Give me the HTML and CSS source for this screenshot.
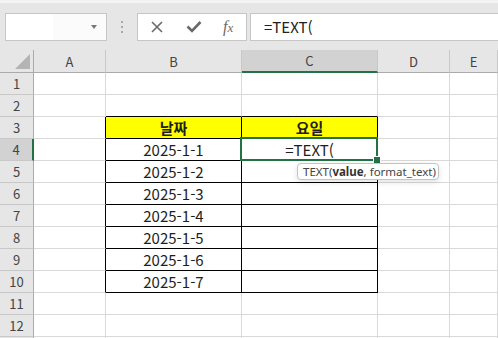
FILE: index.html
```html
<!DOCTYPE html>
<html lang="ko">
<head>
    <meta charset="UTF-8">
    <meta name="viewport" content="width=device-width, initial-scale=1.0">
    <title>TEXT 함수</title>
    <link rel="stylesheet" href="styles.css">
</head>
<body>
    <div class="ribbon-edge"></div>
    <div class="toolbar">
        <div class="name-box">
            <span class="name-arrow"></span>
        </div>
        <div class="grip"><i></i><i></i><i></i></div>
        <div class="fx-buttons">
            <svg class="ico" width="14" height="14" viewBox="0 0 14 14">
                <path d="M2 2 L12 12 M12 2 L2 12" stroke="#6a6a6a" stroke-width="1.6" fill="none"/>
            </svg>
            <svg class="ico" width="16" height="14" viewBox="0 0 16 14">
                <path d="M1.5 6.5 L6 11 L14.5 2" stroke="#6a6a6a" stroke-width="2.6" fill="none"/>
            </svg>
            <span class="fx">f<small>x</small></span>
        </div>
        <div class="formula">=TEXT(</div>
    </div>

    <div class="sheet">
        <div class="row head">
            <div class="corner">
                <svg width="15" height="15" viewBox="0 0 15 15"><polygon points="15,0 15,15 0,15" fill="#b4b4b4"/></svg>
            </div>
            <div class="ch">A</div>
            <div class="ch">B</div>
            <div class="ch on">C</div>
            <div class="ch">D</div>
            <div class="ch">E</div>
        </div>
        <div class="row">
            <div class="rh">1</div><div class="c"></div><div class="c"></div><div class="c"></div><div class="c"></div><div class="c"></div>
        </div>
        <div class="row">
            <div class="rh">2</div><div class="c"></div><div class="c tt"></div><div class="c tt"></div><div class="c"></div><div class="c"></div>
        </div>
        <div class="row">
            <div class="rh">3</div><div class="c tl"></div><div class="c t hd">날짜</div><div class="c t hd">요일</div><div class="c"></div><div class="c"></div>
        </div>
        <div class="row">
            <div class="rh on">4</div><div class="c tl"></div><div class="c t">2025-1-1</div>
            <div class="c t sel">=TEXT(
                <div class="tip">TEXT(<b>value</b>, format_text)</div>
            </div>
            <div class="c"></div><div class="c"></div>
        </div>
        <div class="row">
            <div class="rh">5</div><div class="c tl"></div><div class="c t">2025-1-2</div><div class="c t"></div><div class="c"></div><div class="c"></div>
        </div>
        <div class="row">
            <div class="rh">6</div><div class="c tl"></div><div class="c t">2025-1-3</div><div class="c t"></div><div class="c"></div><div class="c"></div>
        </div>
        <div class="row">
            <div class="rh">7</div><div class="c tl"></div><div class="c t">2025-1-4</div><div class="c t"></div><div class="c"></div><div class="c"></div>
        </div>
        <div class="row">
            <div class="rh">8</div><div class="c tl"></div><div class="c t">2025-1-5</div><div class="c t"></div><div class="c"></div><div class="c"></div>
        </div>
        <div class="row">
            <div class="rh">9</div><div class="c tl"></div><div class="c t">2025-1-6</div><div class="c t"></div><div class="c"></div><div class="c"></div>
        </div>
        <div class="row">
            <div class="rh">10</div><div class="c tl"></div><div class="c t">2025-1-7</div><div class="c t"></div><div class="c"></div><div class="c"></div>
        </div>
        <div class="row">
            <div class="rh">11</div><div class="c"></div><div class="c"></div><div class="c"></div><div class="c"></div><div class="c"></div>
        </div>
        <div class="row">
            <div class="rh">12</div><div class="c"></div><div class="c"></div><div class="c"></div><div class="c"></div><div class="c"></div>
        </div>
        <div class="row">
            <div class="rh"></div><div class="c"></div><div class="c"></div><div class="c"></div><div class="c"></div><div class="c"></div>
        </div>
    </div>
</body>
</html>
```

FILE: styles.css
```css
* {
    box-sizing: border-box;
}
body {
    margin: 0;
    width: 498px;
    height: 338px;
    overflow: hidden;
    background: #ffffff;
    font-family: "Noto Sans CJK KR", "Noto Sans", sans-serif;
    color: #222;
}
.ribbon-edge {
    height: 3px;
    background: #f3f3f3;
}
.toolbar {
    display: flex;
    height: 47px;
    padding: 10px 0 9px 5px;
    background: #e6e6e6;
}
.name-box {
    position: relative;
    width: 102px;
    background: linear-gradient(to right, #fff 0, #fff 47px, #fbfbfb 47px);
    border: 1px solid #c6c6c6;
}
.name-arrow {
    position: absolute;
    right: 9px;
    top: 11px;
    border-left: 3px solid transparent;
    border-right: 3px solid transparent;
    border-top: 4px solid #777;
}
.grip {
    width: 30px;
    display: flex;
    flex-direction: column;
    align-items: center;
    justify-content: center;
    gap: 3px;
}
.grip i {
    display: block;
    width: 2px;
    height: 2px;
    background: #a8a8a8;
}
.fx-buttons {
    width: 110px;
    margin-right: 3px;
    display: flex;
    align-items: center;
    padding-left: 12px;
    gap: 22px;
    background: #fff;
    border: 1px solid #c6c6c6;
}
.fx {
    font-family: "Liberation Serif", serif;
    font-style: italic;
    font-size: 16px;
    color: #6a6a6a;
    line-height: 1;
    margin-left: -1px;
}
.fx small {
    font-size: 13px;
}
.formula {
    flex: 1;
    background: #fff;
    border: 1px solid #c6c6c6;
    border-right: none;
    padding-left: 13px;
    font-size: 15px;
    line-height: 25px;
    color: #222;
}
.row {
    display: grid;
    grid-template-columns: 34px 72px 136px 136px 72px 1fr;
    height: 22px;
}
.row.head {
    height: 23px;
}
.row > div {
    display: flex;
    align-items: center;
    justify-content: center;
    border-right: 1px solid #d9d9d9;
    border-bottom: 1px solid #d9d9d9;
}
.corner {
    background: #e6e6e6;
    border-right: 1px solid #ababab !important;
    border-bottom: 1px solid #ababab !important;
    justify-content: flex-end !important;
    align-items: flex-end !important;
    padding: 0 3px 3px 0;
}
.ch {
    background: #e6e6e6;
    border-right: 1px solid #c8c8c8 !important;
    border-bottom: 1px solid #ababab !important;
    font-size: 13px;
    color: #444;
}
.ch.on {
    background: #d2d2d2;
    border-bottom: 2px solid #217346 !important;
}
.rh {
    background: #e6e6e6;
    border-right: 1px solid #ababab !important;
    border-bottom: 1px solid #c8c8c8 !important;
    font-size: 13px;
    color: #444;
}
.rh.on {
    background: #d2d2d2;
    border-right: 2px solid #217346 !important;
}
.c {
    font-size: 15px;
    color: #1e1e1e;
}
.row > .tl {
    border-right-color: #000;
}
.row > .tt {
    border-bottom-color: #000;
}
.row > .t {
    border-right-color: #000;
    border-bottom-color: #000;
}
.hd {
    background: #ffff00;
    font-weight: bold;
}
.sel {
    position: relative;
}
.sel::before {
    content: '';
    position: absolute;
    left: -2px;
    top: -2px;
    right: -1px;
    bottom: -1px;
    border: 2px solid #217346;
}
.sel::after {
    content: '';
    position: absolute;
    right: -4px;
    bottom: -4px;
    width: 6px;
    height: 6px;
    background: #217346;
    border: 1px solid #fff;
}
.tip {
    position: absolute;
    left: 55px;
    top: 24px;
    width: 142px;
    height: 17px;
    padding-left: 5px;
    background: #fff;
    border: 1px solid #c4c4c4;
    border-radius: 4px;
    box-shadow: 0 2px 6px rgba(0, 0, 0, 0.12);
    font-family: "Noto Sans", sans-serif;
    font-size: 11.5px;
    line-height: 15px;
    color: #444;
    white-space: nowrap;
    z-index: 2;
}
.tip b {
    font-weight: bold;
    color: #333;
}
```
